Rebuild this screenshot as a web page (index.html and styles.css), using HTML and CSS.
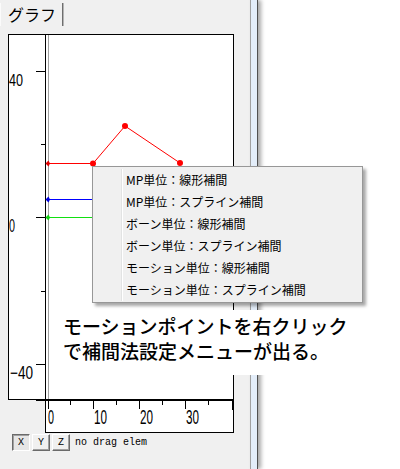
FILE: index.html
```html
<!DOCTYPE html>
<html lang="ja">
<head>
<meta charset="utf-8">
<title>グラフ</title>
<link rel="stylesheet" href="styles.css">
</head>
<body>
<div class="app">
  <div class="panel">
    <div class="tabs"><span class="tab">グラフ</span></div>
    <svg class="chart" width="250" height="404" viewBox="0 30 250 404" xmlns="http://www.w3.org/2000/svg">
      <rect x="45.5" y="34.5" width="188" height="398" fill="#fff" stroke="#000"/>
      <rect x="8.5" y="34.5" width="37" height="365" fill="#fff" stroke="#000"/>
      <line x1="48.5" y1="35" x2="48.5" y2="399" stroke="#a0a0a0"/>
      <rect x="36" y="399" width="197" height="2" fill="#000"/>
      <g stroke="#000">
        <line x1="48.5" y1="401" x2="48.5" y2="409"/>
        <line x1="70.5" y1="401" x2="70.5" y2="405"/>
        <line x1="93.5" y1="401" x2="93.5" y2="409"/>
        <line x1="116.5" y1="401" x2="116.5" y2="405"/>
        <line x1="139.5" y1="401" x2="139.5" y2="409"/>
        <line x1="162.5" y1="401" x2="162.5" y2="405"/>
        <line x1="185.5" y1="401" x2="185.5" y2="409"/>
        <line x1="208.5" y1="401" x2="208.5" y2="405"/>
        <line x1="232.5" y1="401" x2="232.5" y2="410"/>
        <line x1="36" y1="71.5" x2="45" y2="71.5"/>
        <line x1="41" y1="144.5" x2="45" y2="144.5"/>
        <line x1="36" y1="217.5" x2="45" y2="217.5"/>
        <line x1="41" y1="291.5" x2="45" y2="291.5"/>
        <line x1="36" y1="364.5" x2="45" y2="364.5"/>
      </g>
      <g class="tick-label">
        <text x="9" y="86" font-size="17" textLength="14" lengthAdjust="spacingAndGlyphs">40</text>
        <text x="9" y="232" font-size="18" textLength="6" lengthAdjust="spacingAndGlyphs">0</text>
        <text x="10" y="379" font-size="18" textLength="23" lengthAdjust="spacingAndGlyphs">−40</text>
        <text x="48" y="424" font-size="21" textLength="6" lengthAdjust="spacingAndGlyphs">0</text>
        <text x="94" y="424" font-size="21" textLength="13" lengthAdjust="spacingAndGlyphs">10</text>
        <text x="140" y="424" font-size="21" textLength="13" lengthAdjust="spacingAndGlyphs">20</text>
        <text x="186" y="424" font-size="21" textLength="13" lengthAdjust="spacingAndGlyphs">30</text>
      </g>
      <polyline points="48,163.5 93,163.5 125,126 180,163" fill="none" stroke="#ff0000"/>
      <circle cx="93" cy="163.5" r="3" fill="#ff0000"/>
      <circle cx="125" cy="126" r="3" fill="#ff0000"/>
      <circle cx="180" cy="163" r="3" fill="#ff0000"/>
      <polygon points="45.5,163.5 48.5,160.5 50,163.5 48.5,166.5" fill="#e00000"/>
      <line x1="48" y1="199.5" x2="92" y2="199.5" stroke="#0000ff"/>
      <polygon points="45.5,199.5 48.5,196.5 50,199.5 48.5,202.5" fill="#0000e0"/>
      <line x1="48" y1="217.5" x2="92" y2="217.5" stroke="#11e011"/>
      <polygon points="45.5,217.5 48.5,214.5 50,217.5 48.5,220.5" fill="#11d011"/>
    </svg>
    <div class="toolbar">
      <span class="btn pressed">X</span>
      <span class="btn">Y</span>
      <span class="btn">Z</span>
      <span class="status">no drag elem</span>
    </div>
  </div>
  <div class="splitter"></div>
  <div class="canvas"></div>

  <div class="menu">
    <ul class="menu-list">
      <li class="menu-item">MP単位：線形補間</li>
      <li class="menu-item">MP単位：スプライン補間</li>
      <li class="menu-item">ボーン単位：線形補間</li>
      <li class="menu-item">ボーン単位：スプライン補間</li>
      <li class="menu-item">モーション単位：線形補間</li>
      <li class="menu-item">モーション単位：スプライン補間</li>
    </ul>
  </div>

  <div class="note">
    <p class="note-line">モーションポイントを右クリック</p>
    <p class="note-line">で補間法設定メニューが出る。</p>
  </div>
</div>
</body>
</html>
```

FILE: styles.css
```css
html, body {
  margin: 0;
  padding: 0;
  background: #ffffff;
}

.app {
  position: relative;
  display: flex;
  width: 400px;
  height: 469px;
  overflow: hidden;
  font-family: "Noto Sans CJK JP", sans-serif;
}

.panel {
  width: 250px;
  flex: none;
  display: flex;
  flex-direction: column;
  background: #f0f0f0;
}

.tabs {
  height: 30px;
  display: flex;
  align-items: flex-start;
  box-sizing: border-box;
}

.tab {
  margin-top: 3px;
  height: 23px;
  box-sizing: border-box;
  padding: 3px 6px 0 7px;
  border-left: 1px solid #fbfbfb;
  border-right: 1px solid #6e6e6e;
  box-shadow: 1px 0 0 #b4b4b4;
  font-size: 16px;
  line-height: 16px;
  color: #000;
  width: 63px;
}

.chart {
  display: block;
  flex: none;
}

.tick-label text {
  font-family: "Liberation Sans", Arial, sans-serif;
  fill: #000;
}

.toolbar {
  display: flex;
  align-items: center;
  gap: 2px;
  height: 17px;
  padding-left: 12px;
}

.btn {
  width: 18px;
  height: 17px;
  box-sizing: border-box;
  display: flex;
  align-items: center;
  justify-content: center;
  font-family: "Liberation Mono", monospace;
  font-size: 10px;
  color: #000;
  background: #f0f0f0;
  border: 1px solid;
  border-color: #ffffff #6a6a6a #6a6a6a #ffffff;
  box-shadow: inset -1px -1px 0 #a0a0a0;
}

.btn.pressed {
  border-color: #6a6a6a #ffffff #ffffff #6a6a6a;
  box-shadow: inset 1px 1px 0 #a0a0a0;
  background: #e6e6e6;
}

.status {
  margin-left: 3px;
  font-family: "Liberation Mono", monospace;
  font-size: 10px;
  color: #000;
}

.splitter {
  width: 8px;
  flex: none;
  box-sizing: border-box;
  background: #e3edf9;
  border-left: 1px solid #a0a0a0;
  border-right: 1px solid #505050;
  box-shadow: 3px 0 4px rgba(0, 0, 0, 0.35);
}

.canvas {
  flex: 1;
}

.menu {
  position: absolute;
  left: 92px;
  top: 166px;
  width: 271px;
  height: 137px;
  box-sizing: border-box;
  border: 1px solid #979797;
  background: #f0f0f0;
  box-shadow: 3px 3px 3px rgba(0, 0, 0, 0.35);
  padding: 2px;
}

.menu-list {
  list-style: none;
  margin: 0;
  padding: 0;
  background: linear-gradient(to right, transparent 26px, #e2e3e3 26px, #e2e3e3 27px, #ffffff 27px, #ffffff 28px, transparent 28px);
}

.menu-item {
  height: 22px;
  line-height: 22px;
  padding-left: 31px;
  font-size: 12px;
  color: #000;
  white-space: nowrap;
}

.note {
  position: absolute;
  left: 50px;
  top: 310px;
  width: 224px;
  height: 65px;
  box-sizing: border-box;
  padding: 3px 0 0 13px;
  background: #ffffff;
  display: flex;
  flex-direction: column;
}

.note-line {
  margin: 0;
  height: 25px;
  font-size: 19px;
  line-height: 25px;
  font-weight: 500;
  color: #000;
  white-space: nowrap;
}
```
